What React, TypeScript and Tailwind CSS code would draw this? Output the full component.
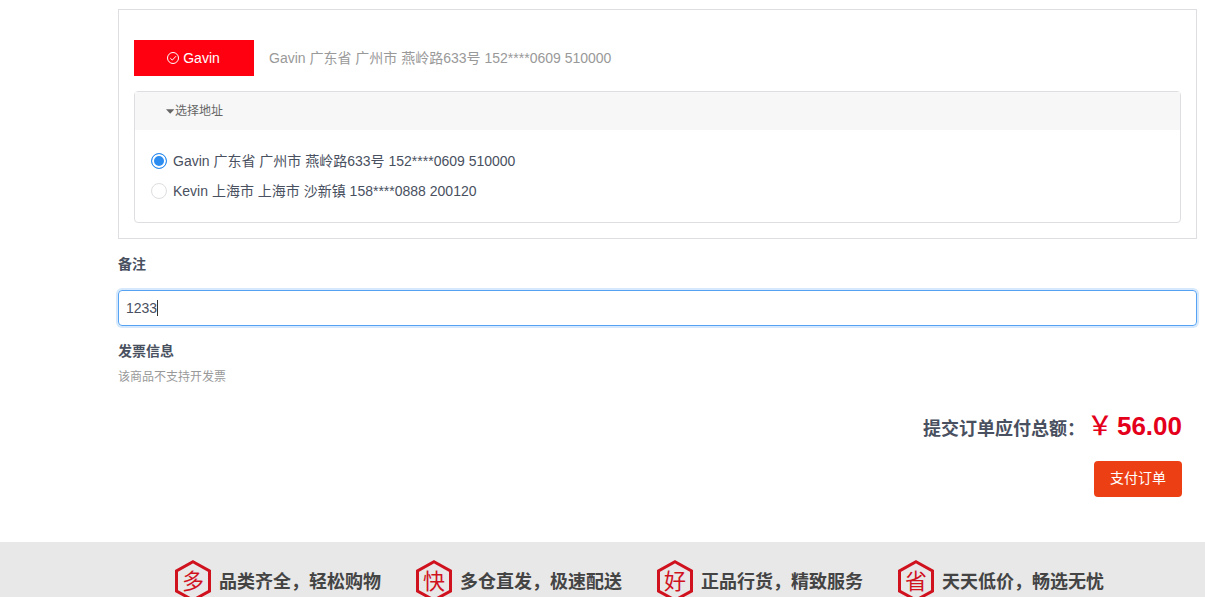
import { useState } from 'react';

const addresses = [
  { id: 1, name: 'Gavin', detail: '广东省 广州市 燕岭路633号 152****0609 510000' },
  { id: 2, name: 'Kevin', detail: '上海市 上海市 沙新镇 158****0888 200120' },
];

const services = [
  { mark: '多', text: '品类齐全，轻松购物' },
  { mark: '快', text: '多仓直发，极速配送' },
  { mark: '好', text: '正品行货，精致服务' },
  { mark: '省', text: '天天低价，畅选无忧' },
];

function CheckCircle() {
  return (
    <svg width="14" height="14" viewBox="0 0 14 14" fill="none" stroke="currentColor" aria-hidden="true">
      <circle cx="7" cy="7" r="5.5" />
      <path d="M4.3 7.2 6.3 9.1 10 5.2" />
    </svg>
  );
}

function ServiceMark({ mark }: { mark: string }) {
  return (
    <span className="relative flex h-[42px] w-9 items-center justify-center pt-0.5 text-[22px] leading-none text-[#d0121f]">
      <svg className="absolute inset-0" width="36" height="42" viewBox="0 0 36 42" fill="none" stroke="currentColor" strokeWidth="3" aria-hidden="true">
        <path d="M18 1.8 34.5 11V31L18 40.2 1.5 31V11Z" />
      </svg>
      {mark}
    </span>
  );
}

export default function App() {
  const [selected, setSelected] = useState(1);
  const [open, setOpen] = useState(true);
  const [remark, setRemark] = useState('1233');
  const [focused, setFocused] = useState(true);

  const current = addresses.find((a) => a.id === selected) ?? addresses[0];

  return (
    <div className="h-screen overflow-hidden bg-white font-['Liberation_Sans','Noto_Sans_CJK_SC',sans-serif] text-sm text-[#495060]">
      <main className="pt-[9px] pr-2 pb-[45px] pl-[118px]">
        <section className="border border-[#dddee1] px-[15px] pt-[30px] pb-[15px]">
          <div className="flex items-center gap-[15px]">
            <button type="button" className="flex h-9 w-[120px] items-center justify-center gap-[3px] bg-[#ff0010] pr-0.5 text-white">
              <CheckCircle />
              {current.name}
            </button>
            <p className="text-[#999999]">{current.name} {current.detail}</p>
          </div>

          <div className="mt-[15px] rounded-sm border border-[#dddee1]">
            <button
              type="button"
              aria-expanded={open}
              onClick={() => setOpen(!open)}
              className="flex h-[38px] w-full items-center bg-[#f7f7f7] pl-[31px] text-xs text-[#666666]"
            >
              <svg width="9" height="5" viewBox="0 0 9 5" fill="currentColor" aria-hidden="true">
                <path d="M0 0.3H8.4L4.2 4.8Z" />
              </svg>
              选择地址
            </button>
            {open && (
              <div className="px-4 pt-4 pb-4">
                {addresses.map((address) => (
                  <label key={address.id} className="flex h-[30px] items-center gap-1.5">
                    <input
                      type="radio"
                      name="address"
                      checked={selected === address.id}
                      onChange={() => setSelected(address.id)}
                      className="h-4 w-4 appearance-none rounded-full border border-[#dddee1] bg-white checked:border-[#2d8cf0] checked:bg-[#2d8cf0] checked:shadow-[inset_0_0_0_2px_white]"
                    />
                    {address.name} {address.detail}
                  </label>
                ))}
              </div>
            )}
          </div>
        </section>

        <label htmlFor="remark" className="mt-[15px] block leading-5 font-bold">备注</label>
        <div className="relative mt-4">
          <input
            id="remark"
            type="text"
            value={remark}
            onChange={(e) => setRemark(e.target.value)}
            onFocus={() => setFocused(true)}
            onBlur={() => setFocused(false)}
            className={`block h-9 w-full rounded border px-[7px] caret-transparent outline-none ${
              focused ? 'border-[#57a3f3] shadow-[0_0_0_2px_rgba(45,140,240,0.2)]' : 'border-[#dddee1]'
            }`}
          />
          {focused && (
            <span className="pointer-events-none absolute inset-y-0 left-2 flex items-center" aria-hidden="true">
              <span className="invisible">{remark}</span>
              <span className="h-4 w-px bg-[#333333]" />
            </span>
          )}
        </div>

        <h3 className="mt-[15px] leading-5 font-bold">发票信息</h3>
        <p className="mt-1.5 text-xs leading-5 text-[#999999]">该商品不支持开发票</p>

        <div className="mt-[19px] flex flex-col items-end gap-[15px] pr-[15px]">
          <p className="flex h-10 items-baseline gap-0.5 text-lg font-bold">
            提交订单应付总额：
            <span className="text-[26px] leading-10 text-[#e4001b]">
              <span className="pr-1 font-medium">￥</span>56.00
            </span>
          </p>
          <button type="button" className="h-9 rounded bg-[#ed3f14] px-4 pb-0.5 text-white">支付订单</button>
        </div>
      </main>

      <footer className="bg-[#e8e8e8] pt-[18px] pb-[18px] pl-[175px]">
        <ul className="flex gap-[34px]">
          {services.map((service) => (
            <li key={service.mark} className="flex items-center gap-2 pr-px text-lg font-bold whitespace-nowrap text-[#444444]">
              <span className="font-normal">
                <ServiceMark mark={service.mark} />
              </span>
              <span className="pt-0.5">{service.text}</span>
            </li>
          ))}
        </ul>
      </footer>
    </div>
  );
}
